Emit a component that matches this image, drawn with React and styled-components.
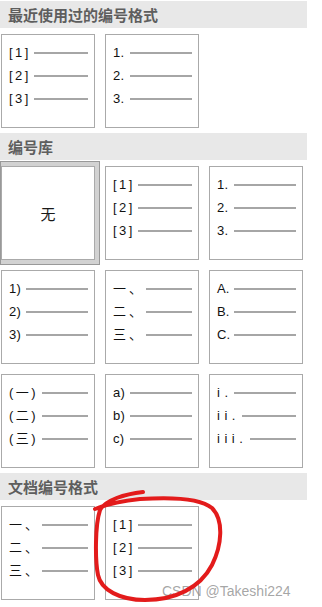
import React from "react";
import styled, { createGlobalStyle } from "styled-components";

const Global = createGlobalStyle`
  html, body { margin: 0; padding: 0; background: #fff; }
  body { font-family: "Liberation Sans", "Noto Sans CJK SC", sans-serif; }
`;

const Page = styled.div`
  position: relative;
  width: 322px;
  height: 607px;
  overflow: hidden;
`;

const Panel = styled.div`
  width: 307px;
  padding-top: 1px;
  display: flex;
  flex-direction: column;
  gap: 5px;
`;

const Section = styled.section`
  display: flex;
  flex-direction: column;
  gap: 6px;
`;

const Header = styled.div`
  height: 27px;
  background: #e8e8e8;
  display: flex;
  align-items: center;
  padding-left: 8px;
  font-family: "Noto Sans CJK SC", sans-serif;
  font-weight: 700;
  font-size: 15px;
  color: #5e5e5e;
`;

const Grid = styled.div`
  display: grid;
  grid-template-columns: repeat(3, 94px);
  grid-auto-rows: 94px;
  gap: 10px;
  padding-left: 1px;
`;

const SelectedFrame = styled.div`
  margin: -5px -5px -5px -1px;
  padding: 4px 4px 4px 0;
  border: 1px solid #999;
  background: #d2d2d2;
`;

const Box = styled.div`
  box-sizing: border-box;
  width: 94px;
  height: 94px;
  border: 1px solid #aaa;
  background: #fff;
  padding: 6px 6px 0 7px;
  display: flex;
  flex-direction: column;
`;

const EmptyBox = styled(Box)`
  padding: 0;
  align-items: center;
  justify-content: center;
  font-family: "Noto Sans CJK SC", sans-serif;
  font-size: 15px;
  color: #1a1a1a;
`;

const Row = styled.div`
  height: 23px;
  display: flex;
  align-items: center;
`;

const Label = styled.span`
  flex: none;
  width: ${(p) => p.$w}px;
  letter-spacing: ${(p) => p.$ls}px;
  white-space: pre;
  font-family: "Liberation Sans", Arial, "Noto Sans CJK SC", sans-serif;
  font-size: 13px;
  line-height: 16px;
  color: #111;
`;

const Line = styled.div`
  flex: 1;
  height: 2px;
  margin-left: 1px;
  background: #a6a6a6;
`;

const BottomRule = styled.div`
  width: 307px;
  height: 1px;
  margin-top: 4px;
  background: #e2e2e2;
`;

const Watermark = styled.div`
  position: absolute;
  left: 162px;
  top: 583px;
  font-family: "Liberation Sans", Arial, sans-serif;
  font-size: 14px;
  color: rgba(150, 150, 150, 0.85);
  white-space: nowrap;
`;

const Overlay = styled.svg`
  position: absolute;
  left: 0;
  top: 0;
  pointer-events: none;
`;

function ListBox({ format }) {
  return (
    <Box>
      {format.labels.map((l, i) => (
        <Row key={i}>
          <Label $w={Array.isArray(format.w) ? format.w[i] : format.w} $ls={format.ls}>
            {l}
          </Label>
          <Line />
        </Row>
      ))}
    </Box>
  );
}

const BRACKET = { labels: ["[1]", "[2]", "[3]"], w: 24, ls: 2.5 };
const DOT = { labels: ["1.", "2.", "3."], w: 16, ls: 0.3 };
const PAREN = { labels: ["1)", "2)", "3)"], w: 16, ls: 0.3 };
const CN = { labels: ["一、", "二、", "三、"], w: 32, ls: 3 };
const ALPHA = { labels: ["A.", "B.", "C."], w: 16, ls: 0 };
const CNPAREN = { labels: ["(一)", "(二)", "(三)"], w: 32, ls: 2.4 };
const LOWER = { labels: ["a)", "b)", "c)"], w: 16, ls: 0.3 };
const ROMAN = { labels: ["i.", "ii.", "iii."], w: [16, 24, 32], ls: 4.5 };

export default function App() {
  return (
    <>
      <Global />
      <Page>
        <Panel>
          <Section>
            <Header>最近使用过的编号格式</Header>
            <Grid>
              <ListBox format={BRACKET} />
              <ListBox format={DOT} />
            </Grid>
          </Section>
          <Section>
            <Header>编号库</Header>
            <Grid>
              <SelectedFrame>
                <EmptyBox>无</EmptyBox>
              </SelectedFrame>
              <ListBox format={BRACKET} />
              <ListBox format={DOT} />
              <ListBox format={PAREN} />
              <ListBox format={CN} />
              <ListBox format={ALPHA} />
              <ListBox format={CNPAREN} />
              <ListBox format={LOWER} />
              <ListBox format={ROMAN} />
            </Grid>
          </Section>
          <Section>
            <Header>文档编号格式</Header>
            <Grid>
              <ListBox format={CN} />
              <ListBox format={BRACKET} />
            </Grid>
          </Section>
          <BottomRule />
        </Panel>
        <Watermark>CSDN @Takeshi224</Watermark>
        <Overlay width="322" height="607" viewBox="0 0 322 607">
          <path
            d="M143,492 C125,494 105,500 100,510 C95,525 95,560 98,575 C101,590 120,600 145,600 C175,600 200,588 212,565 C222,545 224,520 212,508 C200,498 170,497 140,499 C120,501 105,505 95,509"
            fill="none"
            stroke="#e31b1b"
            strokeWidth="4"
            strokeLinecap="round"
            strokeLinejoin="round"
          />
        </Overlay>
      </Page>
    </>
  );
}
